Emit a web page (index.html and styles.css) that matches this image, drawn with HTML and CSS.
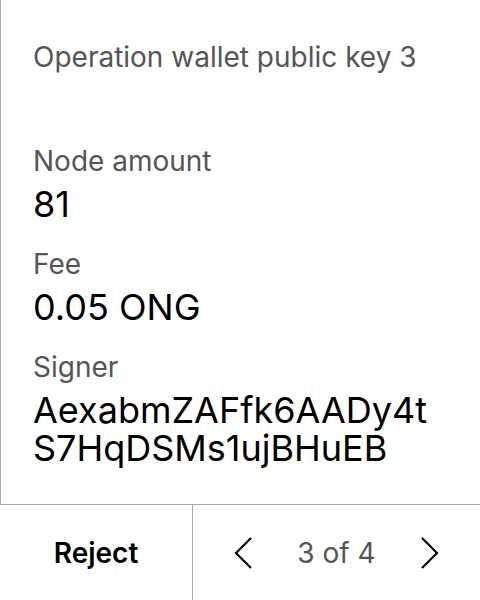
FILE: index.html
```html
<!DOCTYPE html>
<html>
<head>
<meta charset="utf-8">
<link rel="stylesheet" href="styles.css">
</head>
<body>
<div class="screen">
  <div class="content">
    <div class="title">Operation wallet public key 3</div>
    <div class="field field-first">
      <div class="label">Node amount</div>
      <div class="value">81</div>
    </div>
    <div class="field">
      <div class="label">Fee</div>
      <div class="value">0.05 ONG</div>
    </div>
    <div class="field">
      <div class="label">Signer</div>
      <div class="value">AexabmZAFfk6AADy4t<br>S7HqDSMs1ujBHuEB</div>
    </div>
  </div>
  <div class="footer">
    <div class="reject">Reject</div>
    <div class="pager">
      <svg class="chev" width="20" height="34" viewBox="0 0 20 34"><path d="M18 2 L3 17 L18 32" fill="none" stroke="#000" stroke-width="2.2"/></svg>
      <span class="count">3 of 4</span>
      <svg class="chev" width="20" height="34" viewBox="0 0 20 34"><path d="M2 2 L17 17 L2 32" fill="none" stroke="#000" stroke-width="2.2"/></svg>
    </div>
  </div>
</div>
</body>
</html>
```
FILE: styles.css
```css
html, body {
  margin: 0;
  padding: 0;
  background: #fff;
}
body {
  font-family: Inter, "Noto Sans", sans-serif;
  width: 480px;
  height: 600px;
  overflow: hidden;
}
.screen {
  display: flex;
  flex-direction: column;
  height: 600px;
}
.content {
  flex: 1;
  border-left: 1px solid #aaa;
  padding: 40px 0 0 32px;
}
.title {
  font-size: 28px;
  line-height: 34px;
  color: #555;
}
.field {
  display: flex;
  flex-direction: column;
  margin-top: 24px;
}
.field-first {
  margin-top: 70px;
}
.label {
  font-size: 28px;
  line-height: 34px;
  color: #555;
}
.value {
  font-size: 36px;
  line-height: 38px;
  color: #000;
  margin-top: 7px;
}
.footer {
  height: 95px;
  border-top: 1px solid #aaa;
  display: flex;
}
.reject {
  width: 192px;
  border-right: 1px solid #aaa;
  display: flex;
  align-items: center;
  justify-content: center;
  font-size: 28px;
  font-weight: 600;
  color: #000;
}
.pager {
  flex: 1;
  display: flex;
  align-items: center;
  justify-content: center;
  gap: 44px;
}
.count {
  font-size: 28px;
  color: #555;
}
.chev {
  display: block;
}
```
